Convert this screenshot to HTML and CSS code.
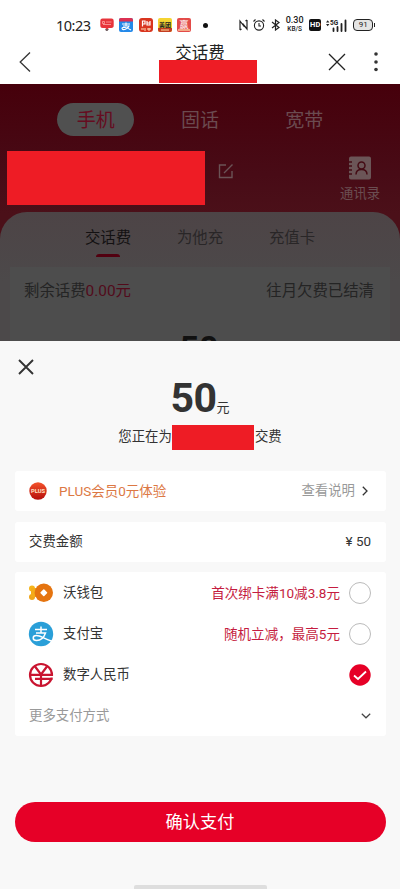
FILE: index.html
```html
<!DOCTYPE html>
<html lang="zh-CN">
<head>
<meta charset="utf-8">
<meta name="viewport" content="width=device-width, initial-scale=1">
<title>交话费</title>
<link rel="stylesheet" href="styles.css">
</head>
<body>
<div class="phone">
  <header class="status">
    <span class="time">10:23</span>
    <div class="apps">
      <svg width="14" height="14" viewBox="0 0 14 14"><path d="M2.500 .5h9a2.200 2.200 0 0 1 2.200 2.200v4.600A2.500 2.500 0 0 1 11.200 10H8.800L7 11.500 5.200 10H2.800A2.500 2.500 0 0 1 .3 7.500V2.700A2.200 2.200 0 0 1 2.500 .5z" fill="#e7343b"/><path d="M2.500 3.500h2v2h-2zM6 4h5.500M3 6.500h8" stroke="#ffb5b0" stroke-width=".7" fill="none"/><path d="M5 11.300h4l-1.500 1.500H6z" fill="#493034"/></svg>
      <svg width="14" height="14" viewBox="0 0 14 14"><rect width="14" height="14" rx="2" fill="#2489e9"/><path d="M0 2a2 2 0 0 1 2-2h10a2 2 0 0 1 2 2v1.500H0z" fill="#dc3152"/><path d="M3 6h8M7 4.500v3.500M4 8h6c-1 3-6 5-7 2.500C3 8.500 8 9.500 12 12" stroke="#fff" stroke-width="1.100" fill="none"/></svg>
      <svg width="14" height="14" viewBox="0 0 14 14"><rect width="14" height="14" rx="3" fill="#d9351f"/><path d="M3.500 8.500V3H6v3H3.500M8 3v4h3V3M8 5h3" stroke="#fff" stroke-width="1.200" fill="none"/><path d="M2 11h3M6 10v3M8 11h4M10 10v3" stroke="#ffe0ba"/></svg>
      <svg width="14" height="14" viewBox="0 0 14 14"><rect width="14" height="14" rx="2" fill="#f5d431"/><path d="M0 10h14v2a2 2 0 0 1-2 2H2a2 2 0 0 1-2-2z" fill="#c53d21"/><text x="7" y="8.500" text-anchor="middle" class="app-text dark">美团</text><path d="M3 12h8" stroke="#ffd9a0"/></svg>
      <svg width="14" height="14" viewBox="0 0 14 14"><rect width="14" height="14" rx="2" fill="#e34b49"/><text x="7" y="9.500" text-anchor="middle" class="app-text big">赢</text><path d="M1 12h12" stroke="#f7c99d" stroke-width="1.500"/></svg>
    </div>
    <i class="more-dot"></i>
    <svg class="nfc" width="9" height="12" viewBox="0 0 9 12" fill="none" stroke="#222" stroke-width="1.200"><path d="M1 11V2l4.500 6M8 1v9L3.500 4.500M1 11l1.500-1M8 1L6.500 2"/></svg>
    <svg class="alarm" width="12" height="12" viewBox="0 0 12 12" fill="none" stroke="#222" stroke-width="1.100"><circle cx="6" cy="6.500" r="4.600"/><path d="M6 4v3h2M.5 2.500l2-2M11.500 2.500l-2-2"/></svg>
    <svg class="bt" width="9" height="12" viewBox="0 0 9 12" fill="none" stroke="#222" stroke-width="1.200"><path d="M1 3l7 5.500L4.500 11V1L8 3.500 1 9"/></svg>
    <div class="speed"><b>0.30</b><span>KB/S</span></div>
    <span class="hd">HD</span>
    <svg class="signal" width="21" height="13" viewBox="0 0 21 13"><path d="M0 3.500l1.700-2.200 1.700 2.200zM0 5l1.700 2.200L3.400 5z" fill="#222"/><text x="4" y="6" class="five-g">5G</text><path d="M7.500 9.500V12M11.500 8v4M15.500 5v7M19.500 1.500V12" stroke="#222" stroke-width="1.800" stroke-linecap="round"/></svg>
    <div class="battery">91</div>
  </header>

  <nav class="nav">
    <svg class="back" width="12" height="22" viewBox="0 0 12 22" fill="none" stroke="#333" stroke-width="1.300"><path d="M11 1.500L1.200 11l9.800 9.500"/></svg>
    <h1>交话费</h1>
    <div class="nav-actions">
      <svg width="18" height="18" viewBox="0 0 18 18" stroke="#222" stroke-width="1.300"><path d="M1 1l16 16M17 1L1 17"/></svg>
      <svg width="4" height="20" viewBox="0 0 4 20" fill="#333"><circle cx="2" cy="2" r="1.800"/><circle cx="2" cy="10" r="1.800"/><circle cx="2" cy="17.500" r="1.800"/></svg>
    </div>
    <div class="mask mask-title"></div>
  </nav>

  <main class="backdrop">
    <div class="types"><span class="type on">手机</span><span class="type">固话</span><span class="type">宽带</span></div>
    <div class="account">
      <div class="mask mask-number"></div>
      <svg class="edit" width="16" height="16" viewBox="0 0 16 16" fill="none" stroke="#6b5356" stroke-width="1.400"><path d="M8 2H1.500v12.500h12.500V8M6 10l8.500-8.500"/></svg>
      <div class="contacts">
        <svg width="24" height="24" viewBox="0 0 24 24"><path d="M3 .5h18a2 2 0 0 1 2 2v19a2 2 0 0 1-2 2H3a2 2 0 0 1-2-2v-19a2 2 0 0 1 2-2z" fill="#6b5557"/><g fill="none" stroke="#440b14" stroke-width="1.500"><path d="M0 6h4M0 10h4M0 14h4M0 18h4M8 18.500c0-3 1.500-5 5.500-5s5.500 2 5.500 5"/><circle cx="13.500" cy="9.500" r="3.500"/></g></svg>
        <span>通讯录</span>
      </div>
    </div>
    <section class="panel">
      <div class="tabs"><span class="tab on">交话费</span><span class="tab">为他充</span><span class="tab">充值卡</span></div>
      <div class="balance">
        <div class="balance-row"><span>剩余话费<em>0.00元</em></span><span>往月欠费已结清</span></div>
        <strong class="hidden-amount">50</strong>
      </div>
    </section>
  </main>

  <section class="sheet">
    <svg class="close" width="16" height="16" viewBox="0 0 16 16" stroke="#333" stroke-width="1.900"><path d="M1 1l14 14M15 1L1 15"/></svg>
    <div class="amount"><b>50</b><span>元</span></div>
    <div class="payee"><span>您正在为</span><div class="mask mask-payee"></div><span>交费</span></div>

    <div class="card row plus">
      <svg class="plus-icon" width="18" height="18" viewBox="0 0 18 18"><defs><linearGradient id="pg" x2="0" y2="1"><stop stop-color="#f4532b"/><stop offset="1" stop-color="#b50d0b"/></linearGradient></defs><circle cx="9" cy="9" r="8.700" fill="url(#pg)"/><text x="9" y="11" text-anchor="middle" class="plus-text">PLUS</text></svg>
      <span class="plus-title">PLUS会员0元体验</span>
      <span class="explain">查看说明</span>
      <svg class="arrow" width="6" height="10" viewBox="0 0 6 10" fill="none" stroke="#333" stroke-width="1.300"><path d="M.8.8L5 5 .8 9.200"/></svg>
    </div>

    <div class="card row total"><span>交费金额</span><span class="price">¥ 50</span></div>

    <div class="card methods">
      <div class="row">
        <svg class="logo" width="26" height="26" viewBox="0 0 26 26"><circle cx="4" cy="8.500" r="3" fill="#f5b51b"/><circle cx="4" cy="17" r="3" fill="#f0a51a"/><path d="M3 8h5v9H3z" fill="#f4ac19"/><circle cx="15.800" cy="12.700" r="9.200" fill="#e5740f"/><path d="M15.800 10l2.700 2.700-2.700 2.700-2.700-2.700z" fill="#fff" stroke="#fff" stroke-width="1.500" stroke-linejoin="round"/></svg>
        <span>沃钱包</span><span class="promo">首次绑卡满10减3.8元</span><i class="radio"></i>
      </div>
      <div class="row">
        <svg class="logo" width="26" height="26" viewBox="0 0 26 26"><circle cx="13" cy="13" r="12.200" fill="#2a9fd8"/><path d="M7 8.500h12M13 5.500v6.500M8 12h9.500c-1.500 4.200-5 7.500-8.800 7.500-2.200 0-3.500-1-3.500-2.500s1.300-2.400 3.300-2.400c3.700 0 7.500 3 15.500 5.600" fill="none" stroke="#fff" stroke-width="1.500"/></svg>
        <span>支付宝</span><span class="promo">随机立减，最高5元</span><i class="radio"></i>
      </div>
      <div class="row">
        <svg class="logo" width="26" height="26" viewBox="0 0 26 26" fill="none" stroke="#c91430" stroke-width="2.200"><circle cx="13" cy="13" r="11"/><path d="M20 14.800h6" stroke="#fff" stroke-width="1.700"/><path d="M7 4.500l6 8 6-8M13 12v12M2 12.800h22.800M7 16.800h17.500"/></svg>
        <span>数字人民币</span>
        <svg class="checked" width="22" height="22" viewBox="0 0 22 22"><circle cx="11" cy="11" r="10.700" fill="#e60027"/><path d="M5 11.500l4 3.500 8-7.500" fill="none" stroke="#fff" stroke-width="1.800"/></svg>
      </div>
      <div class="row more"><span>更多支付方式</span><svg width="10" height="6" viewBox="0 0 10 6" fill="none" stroke="#444" stroke-width="1.200"><path d="M.8.8L5 4.800 9.200.8"/></svg></div>
    </div>

    <button class="pay">确认支付</button>
    <div class="home"></div>
  </section>
</div>
</body>
</html>
```
FILE: styles.css
```css
* { box-sizing: border-box; }
body { margin: 0; font-family: Roboto, "Noto Sans CJK SC", sans-serif; color: #333; }
.phone { width: 400px; height: 889px; overflow: hidden; display: flex; flex-direction: column; background: #fff; }
svg { display: block; flex: none; }
.mask { background: #ee1c25; flex: none; }

.status { height: 42px; padding: 8px 0 0 56px; display: flex; align-items: center; flex: none; color: #222; }
.time { width: 44px; font: 14.500px/18px "Noto Sans", sans-serif; letter-spacing: -.5px; white-space: nowrap; }
.apps { display: flex; gap: 5.300px; }
.app-text { font: 700 6px "Noto Sans CJK SC", sans-serif; fill: #fff; }
.app-text.dark { fill: #222; }
.app-text.big { font-size: 9px; font-weight: 400; }
.more-dot { width: 5px; height: 5px; margin-left: 12px; border-radius: 50%; background: #111; }
.nfc { margin-left: 31px; }
.alarm { margin-left: 5px; }
.bt { margin-left: 6px; }
.speed { width: 21px; margin-left: 4px; display: flex; flex-direction: column; align-items: center; font-size: 6.500px; font-weight: 500; }
.speed b { font-size: 9px; line-height: 11px; margin: -2px 0 -1px; font-weight: 500; }
.speed span { line-height: 8px; }
.hd { width: 12px; height: 12px; margin-left: 4px; border-radius: 2px; background: #111; color: #fff; font-size: 7.500px; line-height: 12px; font-weight: 700; text-align: center; }
.signal { margin-left: 5px; }
.five-g { font: 700 6.500px Roboto, sans-serif; fill: #222; }
.battery { position: relative; width: 20px; height: 12px; margin-left: 6px; border: 1.300px solid #222; border-radius: 4px; background: #e4e4e4; font-size: 8px; line-height: 10px; text-align: center; }
.battery::after { content: ""; position: absolute; right: -3px; top: 3px; width: 1.500px; height: 4px; background: #222; }

.nav { position: relative; height: 42px; flex: none; display: grid; grid-template-columns: 1fr 60px 1fr; align-items: center; }
.back { margin-left: 19px; margin-top: -2px; }
.nav h1 { align-self: start; margin: 0; font-size: 16.500px; line-height: 23px; font-weight: 400; color: #222; text-align: center; white-space: nowrap; }
.nav-actions { display: flex; align-items: center; justify-content: flex-end; gap: 28px; padding-right: 22px; margin-top: -3px; }
.mask-title { position: absolute; left: 159px; top: 18px; width: 98px; height: 23px; }

.backdrop { height: 257px; flex: none; overflow: hidden; background: linear-gradient(#46000b 0, #480b16 90px, #4b1019 130px); }
.types { display: grid; grid-template-columns: repeat(3, 104.300px); justify-content: center; justify-items: center; padding-top: 19px; }
.type { width: 77px; height: 33px; border-radius: 17px; font-size: 19px; line-height: 35px; text-align: center; color: #6b4b50; }
.type.on { background: #505050; color: #650c20; }
.account { display: flex; align-items: flex-start; padding: 15px 20px 0 7px; height: 76px; }
.mask-number { width: 198px; height: 54px; }
.edit { margin: 12px 0 0 13px; }
.contacts { margin-left: auto; margin-top: 5px; display: flex; flex-direction: column; align-items: center; font-size: 13.300px; line-height: 20px; color: #6b4e52; gap: 4px; }
.panel { height: 129px; padding: 0 10px; border-radius: 27px 27px 0 0; background: linear-gradient(#4d4446, #4c494a 70px); }
.tabs { display: grid; grid-template-columns: repeat(3, 92px); height: 55px; padding-left: 52px; }
.tab { padding-top: 15px; font-size: 15.400px; line-height: 22px; text-align: center; color: #292627; }
.tab.on { color: #131112; }
.tab.on::after { content: ""; display: block; width: 24px; height: 3px; margin: 5px auto 0; border-radius: 3px 3px 0 0; background: #520010; }
.balance { height: 74px; background: #4d4d4d; padding: 13px 16px 0 14px; text-align: center; }
.balance-row { display: flex; justify-content: space-between; font-size: 15.400px; line-height: 22px; color: #242424; }
.balance-row em { font-style: normal; color: #520b1b; }
.hidden-amount { display: block; margin-top: 26px; font-size: 34px; line-height: 40px; color: #111; }

.sheet { flex: 1; padding: 18px 14.500px 0; background: #f8f8f8; display: flex; flex-direction: column; }
.close { margin-left: 3px; }
.amount { display: flex; align-items: baseline; justify-content: center; height: 50px; margin-top: -1px; }
.amount b { font-size: 41px; line-height: 48px; letter-spacing: -.5px; }
.amount span { font-size: 13px; line-height: 20px; }
.payee { display: flex; justify-content: center; align-items: center; height: 26px; font-size: 13.400px; line-height: 20px; }
.mask-payee { width: 82px; height: 25px; margin: 0 .5px; }
.card { background: #fff; border-radius: 3px; flex: none; }
.row { display: flex; align-items: center; height: 41px; padding: 0 14.500px; font-size: 13.400px; line-height: 20px; }
.plus { margin-top: 21px; height: 40px; }
.plus-icon { margin-right: 12px; }
.plus-text { font: 700 5.800px Roboto, sans-serif; fill: #ffe0c6; }
.plus-title { color: #dc7844; font-size: 13.500px; }
.explain { margin-left: auto; color: #999; }
.arrow { margin: 0 3px 0 7px; }
.total { margin-top: 11px; height: 40px; }
.price { margin-left: auto; }
.methods { margin-top: 10px; height: 164px; }
.logo { margin: 0 9px 0 -1px; }
.promo { margin-left: auto; color: #c51c40; font-size: 13.550px; }
.radio { width: 22px; height: 22px; margin-left: 9px; border: 1px solid #bbb; border-radius: 50%; }
.checked { margin-left: auto; }
.more { justify-content: space-between; color: #999; }
.pay { margin: 66px 0 0; height: 39.500px; flex: none; border: 0; border-radius: 20px; background: #e60027; color: #fff; font: 17.200px/38px Roboto, "Noto Sans CJK SC", sans-serif; }
.home { width: 133px; height: 4px; margin: auto auto 0; border-radius: 2px 2px 0 0; background: #dedede; }
```
